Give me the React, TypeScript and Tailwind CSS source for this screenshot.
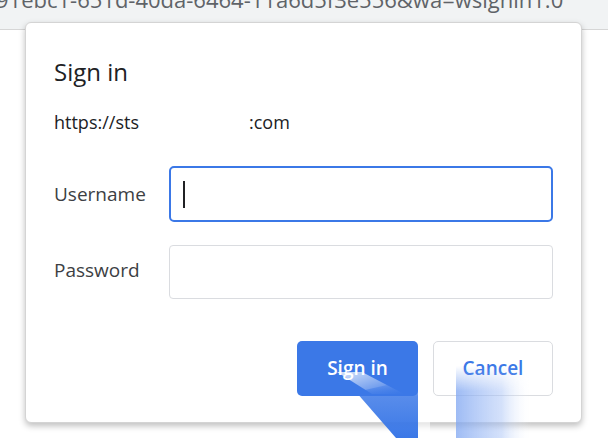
const URL_TAIL = "91ebc1-651d-40da-6464-11a6d5f3e556&wa=wsignin1.0";

function Smear() {
  // drag streak left over the buttons in the screenshot
  return (
    <svg
      className="pointer-events-none absolute left-0 top-0"
      width={608}
      height={438}
      viewBox="0 0 608 438"
    >
      <defs>
        <linearGradient id="fadeDown" x1="0" y1="0" x2="0" y2="1">
          <stop offset="0" stopColor="#3b78e7" stopOpacity="0" />
          <stop offset="0.3" stopColor="#3b78e7" stopOpacity="0.85" />
          <stop offset="1" stopColor="#3b78e7" stopOpacity="1" />
        </linearGradient>
        <linearGradient id="fadeRight" x1="0" y1="0" x2="1" y2="0">
          <stop offset="0" stopColor="#7ea5f1" stopOpacity="0.75" />
          <stop offset="0.6" stopColor="#a9c3f6" stopOpacity="0.5" />
          <stop offset="1" stopColor="#ffffff" stopOpacity="0" />
        </linearGradient>
        <linearGradient id="maskDown" x1="0" y1="0" x2="0" y2="1">
          <stop offset="0" stopColor="#000000" />
          <stop offset="0.35" stopColor="#ffffff" />
          <stop offset="1" stopColor="#ffffff" />
        </linearGradient>
        <mask id="bandMask">
          <rect x="456" y="366" width="76" height="72" fill="url(#maskDown)" />
        </mask>
        <linearGradient id="whiteDiag" x1="0" y1="0" x2="1" y2="1">
          <stop offset="0" stopColor="#ffffff" stopOpacity="0.8" />
          <stop offset="1" stopColor="#ffffff" stopOpacity="0" />
        </linearGradient>
      </defs>
      <polygon points="337,372 362,372 404,394 372,394" fill="url(#whiteDiag)" />
      <polygon points="356,392 418,378 418,438 396,438" fill="url(#fadeDown)" />
      <rect x="418" y="376" width="12" height="62" fill="#ffffff" opacity="0.55" />
      <rect x="456" y="366" width="76" height="72" fill="url(#fadeRight)" mask="url(#bandMask)" />
    </svg>
  );
}

export default function App() {
  return (
    <div
      className="relative h-[438px] w-[608px] overflow-hidden bg-white"
      style={{ fontFamily: '"Open Sans", "Noto Sans", sans-serif' }}
    >
      <div className="h-[30px] overflow-hidden border-b border-[#d6d6d6] bg-[#f1f3f4]">
        <div className="-ml-[4px] -mt-[16px] whitespace-nowrap text-[22px] leading-[30px] text-[#5f6368]">
          {URL_TAIL}
        </div>
      </div>

      <div className="absolute left-[25px] top-[22px] flex h-[401px] w-[557px] flex-col rounded-[6px] border border-[#d4d4d4] bg-white pl-[28px] pr-[28px] pt-[33px] shadow-[0_3px_6px_rgba(0,0,0,0.25)]">
        <h1 className="text-[24px] leading-[32px] text-[#202124]">Sign in</h1>
        <div className="mt-[22px] flex text-[18px] leading-[24px] text-[#202124]">
          <span>https://sts</span>
          <span className="ml-[110px]">:com</span>
        </div>

        <div className="mt-[32px] grid grid-cols-[115px_1fr] gap-y-[23px] text-[19px] text-[#3c4043]">
          <label className="flex h-[56px] items-center">Username</label>
          <div className="flex h-[56px] items-center rounded-[5px] border-2 border-[#3b78e7] pl-[12px]">
            <span className="h-[27px] w-[2px] bg-[#202124]" />
          </div>
          <label className="flex h-[54px] items-center pb-[4px]">Password</label>
          <div className="h-[54px] rounded-[4px] border border-[#dadce0]" />
        </div>

        <div className="mt-[42px] flex justify-end gap-[15px] text-[19px] font-semibold">
          <button className="h-[55px] w-[121px] rounded-[5px] bg-[#3b78e7] text-white">
            Sign in
          </button>
          <button className="h-[55px] w-[120px] rounded-[5px] border border-[#dadce0] bg-white text-[#3b78e7]">
            Cancel
          </button>
        </div>
      </div>

      <Smear />
    </div>
  );
}
